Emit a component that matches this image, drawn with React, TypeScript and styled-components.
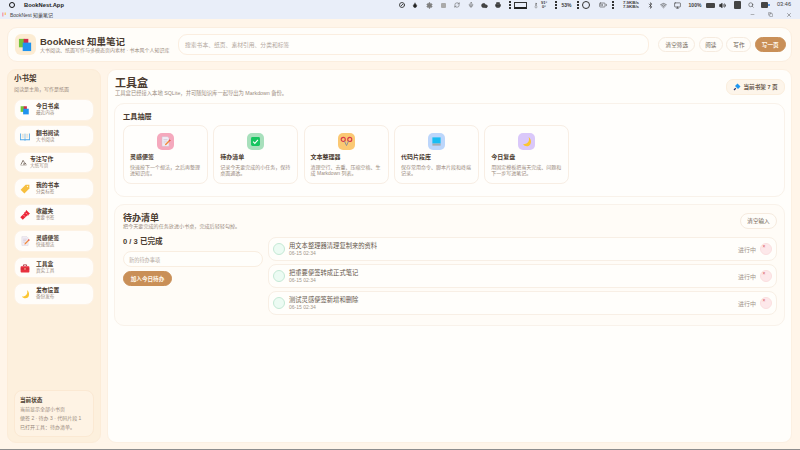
import React from 'react';
import styled, { createGlobalStyle } from 'styled-components';
import {
  BatteryMedium,
  Bluetooth,
  CircleSlash,
  Cloud,
  Copy,
  Droplet,
  Minus,
  Mic,
  Monitor,
  Printer,
  RefreshCw,
  Search,
  Settings,
  Thermometer,
  Volume2,
  Wifi,
  X,
} from 'lucide-react';

const GlobalStyle = createGlobalStyle`
  html, body {
    margin: 0;
    padding: 0;
    width: 800px;
    height: 450px;
    overflow: hidden;
    background: #fff5e9;
    font-family: "Liberation Sans", "Noto Sans CJK SC", sans-serif;
  }
  * { box-sizing: border-box; }
`;

const textDark = '#4a3b30';
const textSoft = '#9a8b7e';

const Screen = styled.div`
  width: 800px;
  height: 450px;
  display: flex;
  flex-direction: column;
  background: #fff5e9;
  border-bottom: 1px solid #8d8d8d;
`;

const SystemBar = styled.div`
  height: 19px;
  flex-shrink: 0;
  background: #e9eef9;
  display: flex;
  flex-direction: column;
`;

const TrayRow = styled.div`
  height: 10px;
  display: flex;
  align-items: center;
  justify-content: space-between;
  padding: 0 9px;
`;

const AppMenu = styled.div`
  display: flex;
  align-items: center;
  gap: 9px;
  font-size: 5.8px;
  font-weight: 700;
  color: #222;
`;

const Ring = styled.span`
  width: 6px;
  height: 6px;
  border-radius: 50%;
  border: 1.2px solid #111;
`;

const Tray = styled.div`
  display: flex;
  align-items: center;
  color: #333;
  svg { display: block; }
`;

const TraySlot = styled.div<{ $w: number; $m?: number }>`
  width: ${({ $w }) => $w}px;
  margin-left: ${({ $m }) => $m ?? 0}px;
  flex-shrink: 0;
  display: flex;
  justify-content: center;
  align-items: center;
`;

const TrayText = styled.span<{ $size?: number }>`
  font-size: ${({ $size }) => $size ?? 5}px;
  font-weight: 700;
  line-height: 1;
  white-space: pre-line;
  text-align: center;
  color: #3c3c3c;
`;

const TrayClock = styled(TrayText)`
  font-weight: 400;
`;

const TrayDots = styled.span`
  width: 1.6px;
  height: 8px;
  background: repeating-linear-gradient(#333 0 1.6px, transparent 1.6px 3.2px);
`;

const TrayBlock = styled.span<{ $w: number; $h: number; $c?: string }>`
  width: ${({ $w }) => $w}px;
  height: ${({ $h }) => $h}px;
  border-radius: 1px;
  background: ${({ $c }) => $c ?? '#444'};
`;

const ScreenBox = styled.span`
  width: 13px;
  height: 7px;
  border: 0.8px solid #333;
  border-bottom: 2.5px solid #222;
`;

const BigCircle = styled.span`
  width: 8px;
  height: 8px;
  border-radius: 50%;
  border: 0.8px solid #333;
`;

const BlueDot = styled.span`
  width: 2px;
  height: 2px;
  border-radius: 50%;
  background: #2a7de1;
`;

const TitleRow = styled.div`
  height: 9px;
  display: flex;
  align-items: center;
  justify-content: space-between;
  padding: 0 8px 0 2px;
`;

const WindowTitle = styled.div`
  display: flex;
  align-items: center;
  gap: 3px;
  font-size: 5px;
  color: #444;
`;

const WindowControls = styled.div`
  display: flex;
  align-items: center;
  gap: 13px;
  color: #555;
`;

const Body = styled.div`
  flex: 1;
  min-height: 0;
  display: flex;
  flex-direction: column;
  gap: 7px;
  padding: 8px 8px 6px 7px;
`;

const Header = styled.header`
  height: 35px;
  flex-shrink: 0;
  background: #fffdf9;
  border: 1px solid #fbeedf;
  border-radius: 10px;
  display: flex;
  align-items: center;
  gap: 9px;
  padding: 0 5.3px 0 7px;
`;

const LogoTile = styled.div`
  width: 21px;
  height: 21px;
  border-radius: 6px;
  background: #fcecd3;
  display: flex;
  align-items: center;
  justify-content: center;
  flex-shrink: 0;
`;

const Brand = styled.div`
  width: 129px;
  margin-left: -5px;
  flex-shrink: 0;
`;

const BrandName = styled.div`
  font-size: 9.5px;
  line-height: 11px;
  font-weight: 700;
  color: ${textDark};
  white-space: nowrap;
`;

const BrandSub = styled.div`
  font-size: 5px;
  line-height: 7px;
  color: ${textSoft};
  white-space: nowrap;
`;

const SearchBox = styled.div`
  flex: 1;
  height: 21px;
  border: 1px solid #fbeee0;
  border-radius: 9px;
  background: #fffefb;
  display: flex;
  align-items: center;
  padding: 0 6px;
  font-size: 5.8px;
  color: #b3a89e;
`;

const HeaderActions = styled.div`
  display: flex;
  align-items: center;
  gap: 3.3px;
  flex-shrink: 0;
`;

const Pill = styled.button<{ $primary?: boolean; $w: number; $h?: number }>`
  width: ${({ $w }) => $w}px;
  height: ${({ $h }) => $h ?? 15}px;
  padding: 0;
  border-radius: 8px;
  border: 1px solid ${({ $primary }) => ($primary ? '#c98f57' : '#f6ebdf')};
  background: ${({ $primary }) => ($primary ? '#c98f57' : '#fffdf9')};
  color: ${({ $primary }) => ($primary ? '#fff7ec' : '#6d5f53')};
  font-family: inherit;
  font-size: 5.6px;
  font-weight: ${({ $primary }) => ($primary ? 700 : 400)};
  flex-shrink: 0;
`;

const Columns = styled.div`
  flex: 1;
  min-height: 0;
  display: flex;
  gap: 6px;
`;

const Sidebar = styled.aside`
  width: 94px;
  flex-shrink: 0;
  background: #fdf0dd;
  border: 1px solid #fcecd8;
  border-radius: 9px;
  padding: 4px 6px 5px 6px;
  display: flex;
  flex-direction: column;
`;

const SideTitle = styled.div`
  font-size: 7.5px;
  line-height: 10px;
  font-weight: 700;
  color: ${textDark};
`;

const SideSub = styled.div`
  font-size: 5px;
  line-height: 7px;
  margin-top: 2px;
  color: ${textSoft};
`;

const NavList = styled.nav`
  display: flex;
  flex-direction: column;
  gap: 4.8px;
  margin-top: 6px;
`;

const NavItem = styled.div<{ $tight?: boolean }>`
  height: 21.5px;
  background: #fffdfa;
  border: 1px solid #fdf2e4;
  border-radius: 8px;
  display: flex;
  align-items: center;
  gap: ${({ $tight }) => ($tight ? 3 : 6)}px;
  padding-left: 5px;
`;

const NavIcon = styled.div<{ $tight?: boolean }>`
  width: ${({ $tight }) => ($tight ? 7 : 10)}px;
  height: 10px;
  display: flex;
  align-items: center;
  justify-content: center;
  flex-shrink: 0;
`;

const NavText = styled.div`
  min-width: 0;
`;

const NavTitle = styled.div`
  font-size: 5.8px;
  line-height: 7px;
  font-weight: 700;
  color: ${textDark};
  white-space: nowrap;
`;

const NavSub = styled.div`
  font-size: 4.6px;
  line-height: 6px;
  color: ${textSoft};
  white-space: nowrap;
`;

const StatusCard = styled.div`
  margin-top: auto;
  height: 47px;
  border: 1px solid #fbe9d3;
  border-radius: 8px;
  background: #fef3e4;
  padding: 5px;
  color: ${textSoft};
  font-size: 5px;
  line-height: 9px;
  white-space: nowrap;
`;

const StatusTitle = styled.div`
  font-size: 5.6px;
  line-height: 9px;
  font-weight: 700;
  color: ${textDark};
`;

const Main = styled.main`
  flex: 1;
  min-width: 0;
  background: #fffefb;
  border: 1px solid #fcf0e2;
  border-radius: 9px;
  padding: 7px 6.5px 10px 6px;
  display: flex;
  flex-direction: column;
`;

const PageHead = styled.div`
  display: flex;
  justify-content: space-between;
  align-items: center;
  height: 19px;
  padding-left: 1px;
`;

const PageTitle = styled.h1`
  margin: 0;
  font-size: 11px;
  line-height: 13px;
  font-weight: 700;
  color: ${textDark};
`;

const PageSub = styled.div`
  font-size: 5.3px;
  line-height: 7px;
  color: ${textSoft};
  white-space: nowrap;
`;

const PageBadge = styled.div`
  width: 59px;
  height: 16px;
  border-radius: 7px;
  background: #fdf5ea;
  border: 1px solid #fbeedd;
  display: flex;
  align-items: center;
  gap: 3px;
  padding-left: 6px;
  font-size: 5.6px;
  font-weight: 700;
  color: #6a5b4f;
  white-space: nowrap;
  svg { flex-shrink: 0; }
`;

const Panel = styled.section<{ $h: number; $tint?: boolean }>`
  height: ${({ $h }) => $h}px;
  flex-shrink: 0;
  margin-top: 7px;
  border: 1px solid #f9f2ea;
  border-radius: 10px;
  background: ${({ $tint }) => ($tint ? '#fffcf7' : '#fffefc')};
  padding: 8px 6.5px 8px 8px;
`;

const PanelTitle = styled.h2`
  margin: 0;
  font-size: 7.2px;
  line-height: 9px;
  font-weight: 700;
  color: ${textDark};
`;

const ToolGrid = styled.div`
  display: flex;
  gap: 5.3px;
  margin-top: 4px;
`;

const ToolCard = styled.div`
  width: 85px;
  height: 59px;
  flex-shrink: 0;
  background: #fffefc;
  border: 1px solid #f8eee4;
  border-radius: 8px;
  padding: 7px 6px;
`;

const ToolIcon = styled.div<{ $bg: string }>`
  width: 17px;
  height: 17px;
  margin: 0 auto;
  border-radius: 5px;
  background: ${({ $bg }) => $bg};
  display: flex;
  align-items: center;
  justify-content: center;
`;

const ToolName = styled.div`
  margin-top: 3px;
  font-size: 6px;
  line-height: 8px;
  font-weight: 700;
  color: ${textDark};
`;

const ToolDesc = styled.div`
  margin-top: 3px;
  font-size: 5px;
  line-height: 6px;
  color: ${textSoft};
`;

const TodoHead = styled.div`
  display: flex;
  justify-content: space-between;
  align-items: flex-start;
`;

const TodoTitle = styled.h2`
  margin: 0;
  font-size: 9px;
  line-height: 10px;
  font-weight: 700;
  color: ${textDark};
`;

const TodoSub = styled.div`
  font-size: 5.1px;
  line-height: 6px;
  color: ${textSoft};
`;

const TodoBody = styled.div`
  display: flex;
  gap: 5px;
  margin-top: 8px;
`;

const TodoForm = styled.div`
  width: 140px;
  flex-shrink: 0;
`;

const ProgressLabel = styled.div`
  font-size: 7.6px;
  line-height: 10px;
  font-weight: 700;
  color: ${textDark};
`;

const TodoInput = styled.div`
  margin-top: 4px;
  height: 16px;
  border: 1px solid #f9eee1;
  border-radius: 8px;
  background: #fffefb;
  display: flex;
  align-items: center;
  padding-left: 5px;
  font-size: 5.2px;
  color: #b3a89e;
`;

const AddButton = styled(Pill)`
  display: block;
  margin-top: 4px;
`;

const TodoList = styled.div`
  flex: 1;
  min-width: 0;
  display: flex;
  flex-direction: column;
  gap: 3.1px;
`;

const TodoRow = styled.div`
  height: 24px;
  background: #fffefb;
  border: 1px solid #f8efe5;
  border-radius: 8px;
  display: flex;
  align-items: center;
  padding: 0 4px;
`;

const CheckCircle = styled.div`
  width: 12px;
  height: 12px;
  flex-shrink: 0;
  border-radius: 50%;
  background: #ecfbf3;
  border: 1px solid #c4e9d5;
`;

const TodoText = styled.div`
  flex: 1;
  min-width: 0;
  margin-left: 4px;
`;

const TodoName = styled.div`
  font-size: 6.3px;
  line-height: 8px;
  color: #66584c;
  white-space: nowrap;
`;

const TodoTime = styled.div`
  font-size: 5px;
  line-height: 6px;
  color: #a2958a;
`;

const TodoState = styled.span`
  font-size: 6px;
  color: #a2958a;
  margin-right: 4px;
`;

const RemoveButton = styled.div`
  width: 12px;
  height: 12px;
  flex-shrink: 0;
  border-radius: 50%;
  background: #fde8ea;
  border: 1px solid #fbdfe0;
  padding-left: 1.5px;
  color: #d9535f;
  font-size: 5px;
  line-height: 5px;
`;

const Books = ({ size }: { size: number }) => (
  <svg width={size} height={size} viewBox="0 0 16 16">
    <rect x="1" y="2" width="6" height="9" fill="#72c53a" />
    <rect x="6" y="2" width="5" height="10" fill="#d02a4c" />
    <rect x="5" y="6" width="9" height="9" fill="#1f93ee" />
  </svg>
);

const TitleGlyph = () => (
  <svg width="5" height="5" viewBox="0 0 10 10">
    <rect x="0" y="1" width="3" height="8" fill="#f2a3b5" />
    <rect x="5" y="1" width="3" height="5" fill="#f6c879" />
  </svg>
);

const OpenBook = () => (
  <svg width="11" height="11" viewBox="0 0 16 16">
    <path d="M0 3h7l1 1 1-1h7v11H9l-1 1-1-1H0z" fill="#4da6ea" />
    <path d="M1.3 2.5h6.2v10H1.3zM8.5 2.5h6.2v10H8.5z" fill="#fbf9f2" />
    <path d="M3 5h3M3 7h3M3 9h3M10 5h3M10 7h3M10 9h3" stroke="#c2bdb1" strokeWidth=".7" />
  </svg>
);

const WriteMark = () => (
  <svg width="7" height="7" viewBox="0 0 16 16">
    <path d="M2 13 7 3l3 5-2 5M10 13l2-4 2 4" fill="none" stroke="#6a5c52" strokeWidth="1.8" />
    <path d="M1 14.5h14" stroke="#9b8e84" strokeWidth="1" />
  </svg>
);

const Tag = () => (
  <svg width="10" height="10" viewBox="0 0 16 16">
    <path d="M9 1h6v6l-8 8-6-6z" fill="#f7bf3f" />
    <circle cx="12" cy="4" r="1.1" fill="#fff5dc" />
  </svg>
);

const Ticket = () => (
  <svg width="10" height="10" viewBox="0 0 16 16">
    <path d="M10 0l6 6-2 1-1 2-1-.5L6 14l-1.5 1.5L.5 11.5 2 10l5-5-.5-1 2-1z" fill="#ec2537" />
    <path d="M5.5 8l2.5 2.5M9 4.5l2.5 2.5" stroke="#ffd5d5" strokeWidth="1.1" />
  </svg>
);

const Memo = ({ size }: { size: number }) => (
  <svg width={size} height={size} viewBox="0 0 16 16">
    <path d="M3 1h8l2 2v12H3z" fill="#f3eef6" stroke="#c9c3d2" strokeWidth=".6" />
    <path d="M5 5h6M5 7.5h5M5 10h3" stroke="#b8b2c2" strokeWidth=".7" />
    <path d="M14 5l1.5 1.5L9 13l-2 .6.5-2z" fill="#f08a3c" />
    <path d="M14 5l1.5 1.5-1.2 1.2-1.5-1.5z" fill="#e4405f" />
  </svg>
);

const Toolbox = () => (
  <svg width="10" height="10" viewBox="0 0 16 16">
    <path d="M5.5 5V3h5v2" fill="none" stroke="#a4202c" strokeWidth="1.3" />
    <rect x="1" y="5" width="14" height="10" rx="1.2" fill="#e8313f" />
    <path d="M1 9.5h14" stroke="#a4202c" strokeWidth=".8" />
    <rect x="7" y="8.5" width="2" height="2" fill="#f7d9a5" />
  </svg>
);

const Crescent = ({ size }: { size: number }) => (
  <svg width={size} height={size} viewBox="0 0 16 16">
    <path d="M11 1.5C13 6 11 12 3 12c2 3 7 4 10 1 2.5-3 2-9-2-11.5z" fill="#fbc531" />
  </svg>
);

const Check = () => (
  <svg width="11" height="11" viewBox="0 0 16 16">
    <rect x="1.5" y="1.5" width="13" height="13" rx="2" fill="#16c55f" />
    <path d="M4.5 8.3l2.5 2.5 4.5-5" fill="none" stroke="#fff" strokeWidth="1.6" />
  </svg>
);

const Scissors = () => (
  <svg width="13" height="13" viewBox="0 0 16 16">
    <circle cx="4" cy="5.5" r="2.5" fill="none" stroke="#d93a4a" strokeWidth="1.4" />
    <circle cx="12" cy="5.5" r="2.5" fill="none" stroke="#d93a4a" strokeWidth="1.4" />
    <path d="M5.5 7.5 8 13M10.500 7.500 8 13" stroke="#8a8f98" strokeWidth="1.2" />
  </svg>
);

const Laptop = () => (
  <svg width="11" height="11" viewBox="0 0 16 16">
    <rect x="2" y="2" width="12" height="9" fill="#19bdf2" />
    <rect x="2" y="11" width="12" height="3" fill="#a7aab0" />
  </svg>
);

const Pin = () => (
  <svg width="8" height="8" viewBox="0 0 16 16">
    <path d="M9 1l6 6-5 5-6-6z" fill="#1e96f0" />
    <path d="M5.5 10.5 2 14" stroke="#25306b" strokeWidth="2.5" />
  </svg>
);

const navItems = [
  { title: '今日书桌', sub: '最近内容', icon: <Books size={10} /> },
  { title: '翻书阅读', sub: '大书阅读', icon: <OpenBook /> },
  { title: '专注写作', sub: '大纸写页', icon: <WriteMark />, tight: true },
  { title: '我的书本', sub: '分类标签', icon: <Tag /> },
  { title: '收藏夹', sub: '重要书签', icon: <Ticket /> },
  { title: '灵感便签', sub: '快速想法', icon: <Memo size={10} /> },
  { title: '工具盒', sub: '真实工具', icon: <Toolbox /> },
  { title: '发布设置', sub: '备份发布', icon: <Crescent size={10} /> },
];

const tools = [
  { name: '灵感便签', desc: '快速按下一个想法，之后再整理进知识库。', bg: '#f5a9bd', icon: <Memo size={11} /> },
  { name: '待办清单', desc: '记录今天要完成的小任务，保持桌面通透。', bg: '#a8e0bc', icon: <Check /> },
  { name: '文本整理器', desc: '清理空行、去重、压缩空格、生成 Markdown 列表。', bg: '#fbc873', icon: <Scissors /> },
  { name: '代码片段库', desc: '保存常用命令、脚本片段和终端记录。', bg: '#bcd6fb', icon: <Laptop /> },
  { name: '今日复盘', desc: '用固定模板把当天完成、问题和下一步写进笔记。', bg: '#dac8fa', icon: <Crescent size={11} /> },
];

const todos = [
  '用文本整理器清理复制来的资料',
  '把重要便签转成正式笔记',
  '测试灵感便签新增和删除',
];

// tray slots run left to right, $w/$m keep each glyph over its spot in the menu bar
const SystemTray = () => (
  <Tray>
    <TraySlot $w={12}><CircleSlash size={6} strokeWidth={3.5} /></TraySlot>
    <TraySlot $w={14}><Droplet size={6} fill="#222" /></TraySlot>
    <TraySlot $w={14}><Settings size={7} fill="#888" color="#777" /></TraySlot>
    <TraySlot $w={14}><TrayBlock $w={5} $h={5} $c="#aaa" /></TraySlot>
    <TraySlot $w={14}><RefreshCw size={6} color="#555" /></TraySlot>
    <TraySlot $w={14}><Mic size={6} color="#555" /></TraySlot>
    <TraySlot $w={12}><Cloud size={7} fill="#444" /></TraySlot>
    <TraySlot $w={16}><Printer size={6} fill="#444" /></TraySlot>
    <TraySlot $w={8}><TrayDots /></TraySlot>
    <TraySlot $w={13}><ScreenBox /></TraySlot>
    <TraySlot $w={6} $m={6}><Thermometer size={7} color="#666" /></TraySlot>
    <TraySlot $w={8} $m={1}><TrayText $size={4}>{'91°\n0°'}</TrayText></TraySlot>
    <TraySlot $w={4} $m={6}><TrayDots /></TraySlot>
    <TraySlot $w={13} $m={2}><TrayText>53%</TrayText></TraySlot>
    <TraySlot $w={4} $m={3}><TrayDots /></TraySlot>
    <TraySlot $w={8} $m={2}><BigCircle /></TraySlot>
    <TraySlot $w={9} $m={8.5}><BatteryMedium size={8} color="#555" /></TraySlot>
    <TraySlot $w={3} $m={4}><TrayDots /></TraySlot>
    <TraySlot $w={18} $m={7.5}><TrayText $size={4.4}>{'7.9KB/s\n7.9KB/s'}</TrayText></TraySlot>
    <TraySlot $w={8} $m={6}><Bluetooth size={7} /></TraySlot>
    <TraySlot $w={9} $m={4.5}><Wifi size={7} /></TraySlot>
    <TraySlot $w={9} $m={5}><Monitor size={7} /></TraySlot>
    <TraySlot $w={16} $m={5.5}><TrayText>100%</TrayText></TraySlot>
    <TraySlot $w={9} $m={2.5}><TrayBlock $w={9} $h={5} /></TraySlot>
    <TraySlot $w={8} $m={3.5}><Volume2 size={7} fill="#333" /></TraySlot>
    <TraySlot $w={8} $m={7}><TrayBlock $w={7} $h={8} /></TraySlot>
    <TraySlot $w={7} $m={6.5}><Search size={6} /></TraySlot>
    <TraySlot $w={7} $m={6}><TrayBlock $w={7} $h={6} /></TraySlot>
    <TraySlot $w={3}><BlueDot /></TraySlot>
    <TraySlot $w={14} $m={6.5}><TrayClock $size={5.6}>03:46</TrayClock></TraySlot>
  </Tray>
);

export default function App() {
  return (
    <Screen>
      <GlobalStyle />
      <SystemBar>
        <TrayRow>
          <AppMenu>
            <Ring />
            <span>BookNest.App</span>
          </AppMenu>
          <SystemTray />
        </TrayRow>
        <TitleRow>
          <WindowTitle>
            <TitleGlyph />
            <span>BookNest 知巢笔记</span>
          </WindowTitle>
          <WindowControls>
            <Minus size={5} />
            <Copy size={5} />
            <X size={6} />
          </WindowControls>
        </TitleRow>
      </SystemBar>
      <Body>
        <Header>
          <LogoTile>
            <Books size={15} />
          </LogoTile>
          <Brand>
            <BrandName>BookNest 知巢笔记</BrandName>
            <BrandSub>大书阅读、纸面写作与多模态页内素材 · 书本风个人知识库</BrandSub>
          </Brand>
          <SearchBox>搜索书本、纸页、素材引用、分类和标签</SearchBox>
          <HeaderActions>
            <Pill $w={37}>清空筛选</Pill>
            <Pill $w={24.5}>阅读</Pill>
            <Pill $w={25}>写作</Pill>
            <Pill $primary $w={31}>写一页</Pill>
          </HeaderActions>
        </Header>
        <Columns>
          <Sidebar>
            <SideTitle>小书架</SideTitle>
            <SideSub>阅读是主角，写作是纸面</SideSub>
            <NavList>
              {navItems.map((item) => (
                <NavItem key={item.title} $tight={item.tight}>
                  <NavIcon $tight={item.tight}>{item.icon}</NavIcon>
                  <NavText>
                    <NavTitle>{item.title}</NavTitle>
                    <NavSub>{item.sub}</NavSub>
                  </NavText>
                </NavItem>
              ))}
            </NavList>
            <StatusCard>
              <StatusTitle>当前状态</StatusTitle>
              <div>当前显示全部小书页</div>
              <div>便签 2 · 待办 3 · 代码片段 1</div>
              <div>已打开工具：待办清单。</div>
            </StatusCard>
          </Sidebar>
          <Main>
            <PageHead>
              <div>
                <PageTitle>工具盒</PageTitle>
                <PageSub>工具盒已经接入本地 SQLite，并可随知识库一起导出为 Markdown 备份。</PageSub>
              </div>
              <PageBadge>
                <Pin />
                当前书架 7 页
              </PageBadge>
            </PageHead>
            <Panel $h={94}>
              <PanelTitle>工具抽屉</PanelTitle>
              <ToolGrid>
                {tools.map((tool) => (
                  <ToolCard key={tool.name}>
                    <ToolIcon $bg={tool.bg}>{tool.icon}</ToolIcon>
                    <ToolName>{tool.name}</ToolName>
                    <ToolDesc>{tool.desc}</ToolDesc>
                  </ToolCard>
                ))}
              </ToolGrid>
            </Panel>
            <Panel $h={122} $tint>
              <TodoHead>
                <div>
                  <TodoTitle>待办清单</TodoTitle>
                  <TodoSub>把今天要完成的任务放进小书桌，完成后轻轻勾掉。</TodoSub>
                </div>
                <Pill $w={37} $h={16}>清空输入</Pill>
              </TodoHead>
              <TodoBody>
                <TodoForm>
                  <ProgressLabel>0 / 3 已完成</ProgressLabel>
                  <TodoInput>新的待办事项</TodoInput>
                  <AddButton $primary $w={49}>加入今日待办</AddButton>
                </TodoForm>
                <TodoList>
                  {todos.map((todo) => (
                    <TodoRow key={todo}>
                      <CheckCircle />
                      <TodoText>
                        <TodoName>{todo}</TodoName>
                        <TodoTime>06-15 02:34</TodoTime>
                      </TodoText>
                      <TodoState>进行中</TodoState>
                      <RemoveButton>×</RemoveButton>
                    </TodoRow>
                  ))}
                </TodoList>
              </TodoBody>
            </Panel>
          </Main>
        </Columns>
      </Body>
    </Screen>
  );
}
